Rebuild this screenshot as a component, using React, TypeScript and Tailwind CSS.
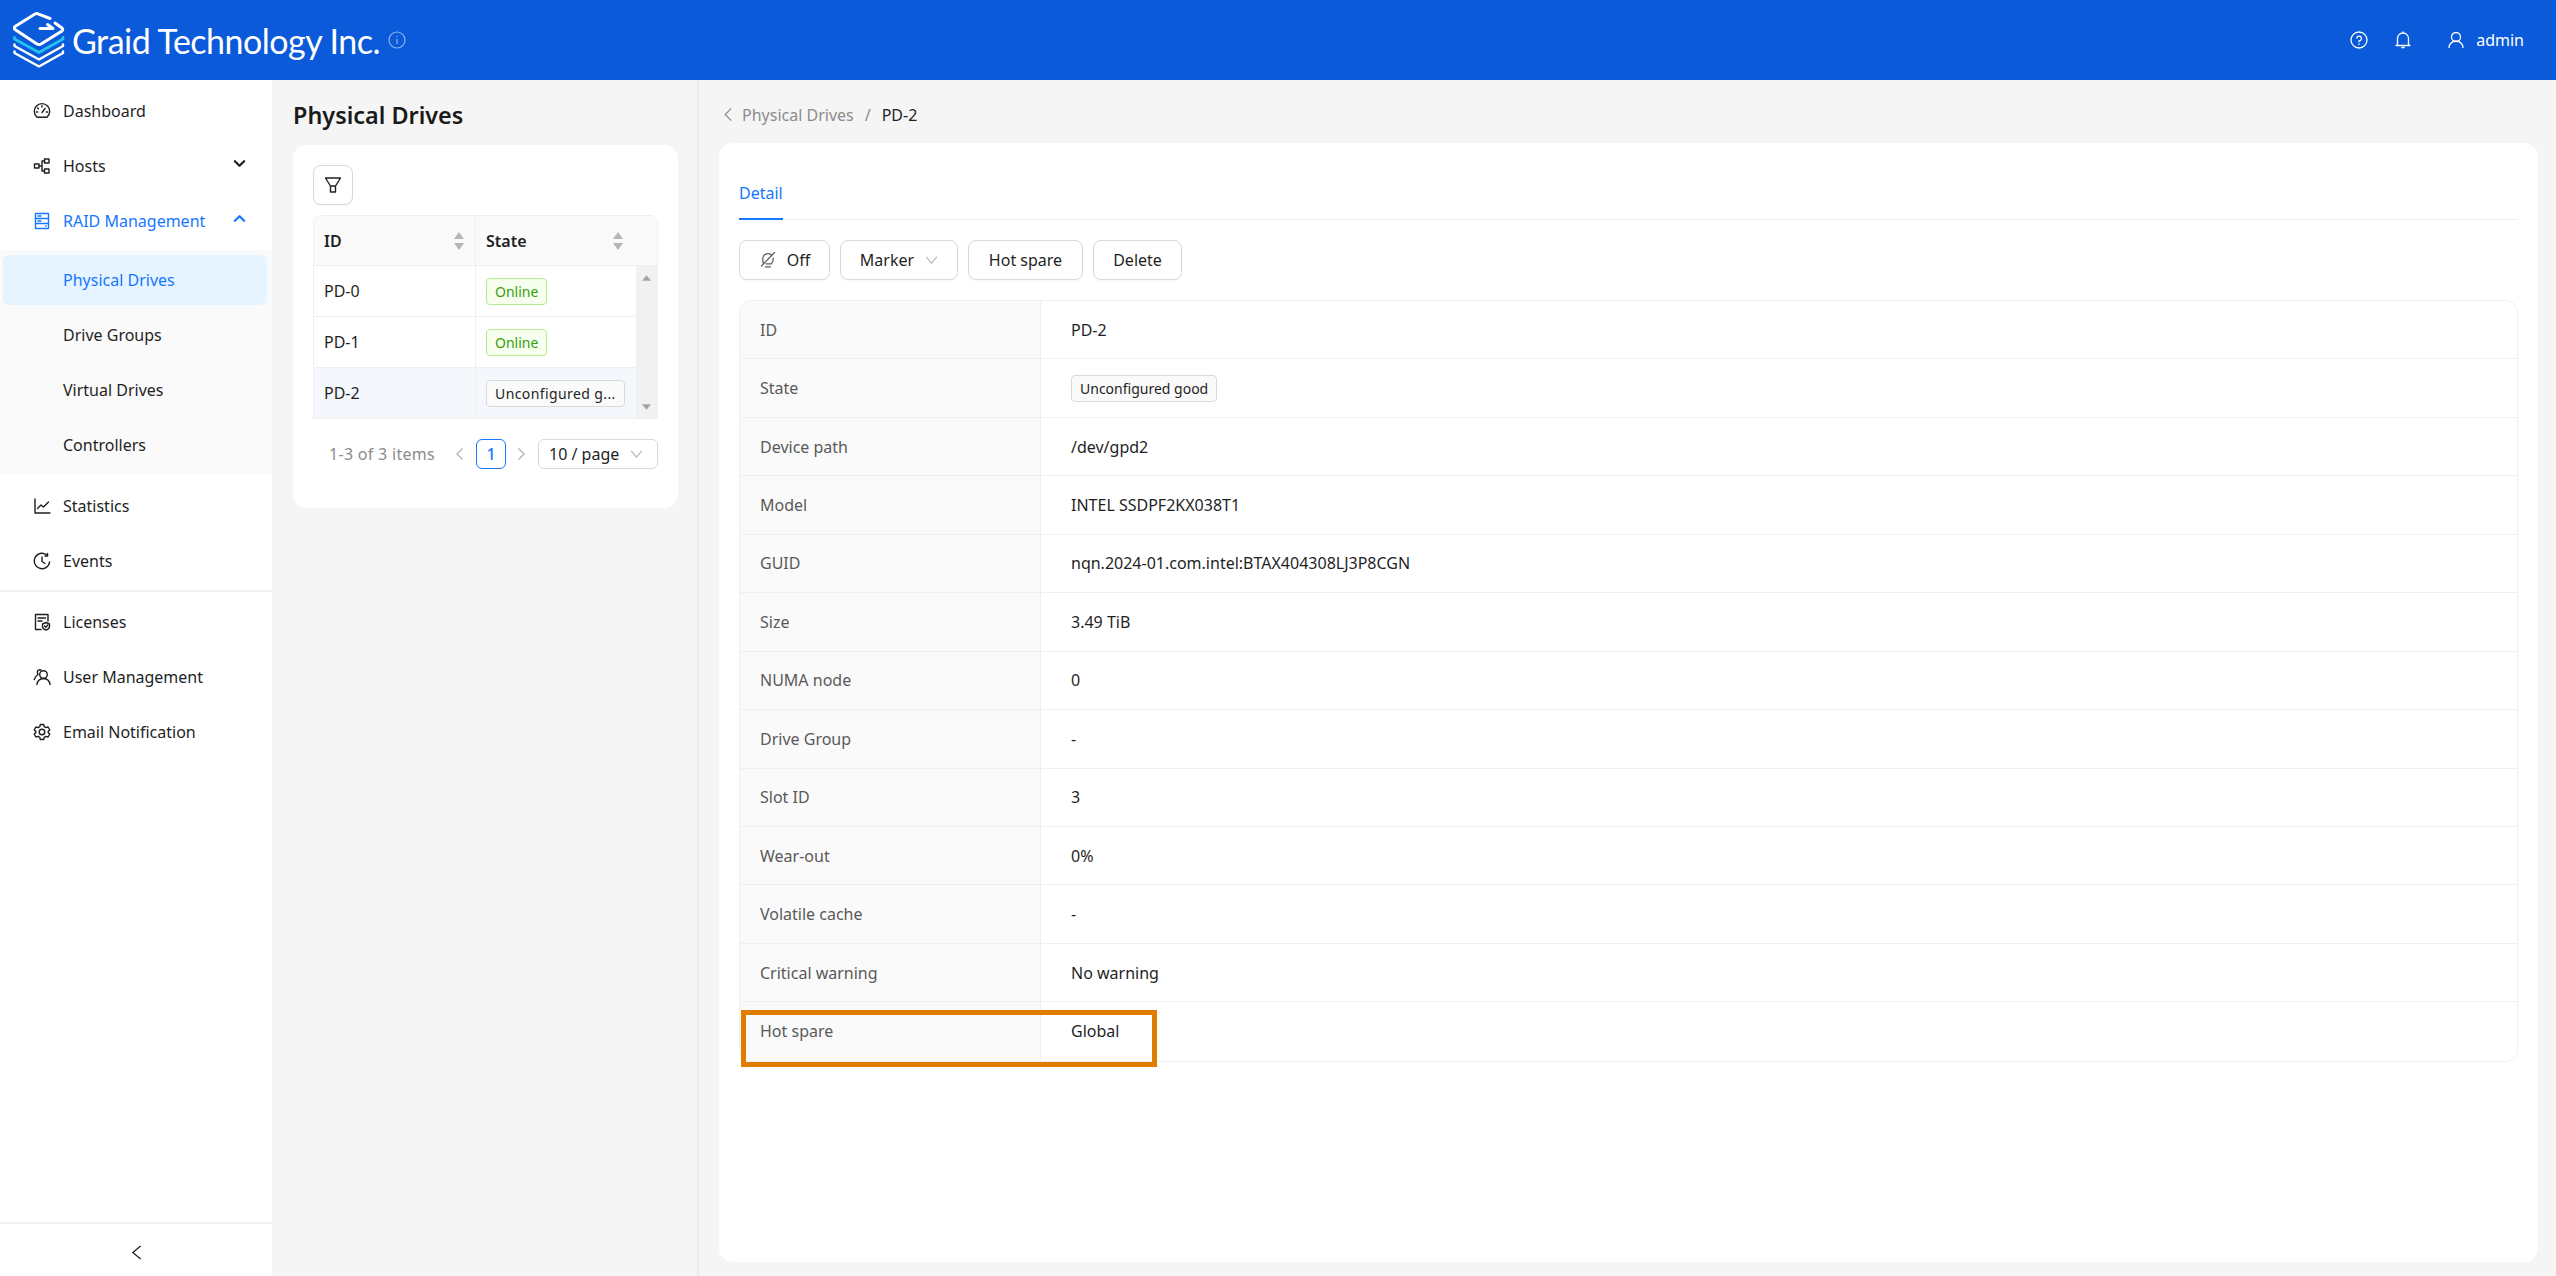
import React from "react";

const Ic = ({ children, className = "w-[18px] h-[18px]", sw = 1.4 }: { children: React.ReactNode; className?: string; sw?: number }) => (
  <svg viewBox="0 0 18 18" fill="none" stroke="currentColor" strokeWidth={sw} strokeLinecap="round" strokeLinejoin="round" className={`shrink-0 ${className}`}>
    {children}
  </svg>
);

const Logo = () => (
  <svg viewBox="0 0 52 56" fill="none" stroke="white" strokeWidth="2.4" strokeLinejoin="round" strokeLinecap="round" className="w-[52px] h-[56px] shrink-0">
    <path d="M37 6.5 L25 1.8 Q23.5 1.2 22 2 L2 14.5 Q0.8 16 2 17.5 L24 32 Q26 33 28 32 L49 19 Q50.5 17.5 49 16 L42 11" strokeWidth="3" />
    <path d="M27 16.5 H40 L34.5 12.5" strokeWidth="3" />
    <path d="M1.5 25.5 V27 L26 40.5 L50 27 V25.5" stroke="#22c3ee" strokeWidth="2.8" />
    <path d="M1.5 32.5 V34 L26 47.5 L50 34 V32.5" />
    <path d="M1.5 39.5 V41 L26 54.5 L50 41 V39.5" />
  </svg>
);

const icons: Record<string, React.ReactNode> = {
  dashboard: (
    <>
      <path d="M4 15.2 A7.7 7.7 0 1 1 14 15.2 Z" />
      <path d="M9 10.5 L12 6.5" />
      <path d="M9 3.8 V5 M4.6 6 L5.5 6.8 M3.5 10 H4.7 M13.3 10 H14.5" />
    </>
  ),
  hosts: (
    <>
      <rect x="1.5" y="7" width="4.5" height="4" />
      <rect x="11.5" y="2" width="4.5" height="4" />
      <rect x="11.5" y="12" width="4.5" height="4" />
      <path d="M6 9 H9 M9 4 V14 M9 4 H11.5 M9 14 H11.5" />
    </>
  ),
  raid: (
    <>
      <rect x="2.5" y="1.5" width="13" height="15" />
      <path d="M2.5 6.5 H15.5 M2.5 11.5 H15.5 M5 4 H8 M5 9 H8 M12.5 14 H13" />
    </>
  ),
  stats: (
    <>
      <path d="M2 2 V16 H17" />
      <path d="M4.5 11.5 L8 8 L10.5 10 L15.5 5" />
    </>
  ),
  events: (
    <>
      <path d="M14.5 3.6 A7.7 7.7 0 1 0 16.6 10" />
      <path d="M9 5 V9.5 L12 11.5" />
      <path d="M14.5 1.5 V4 H12" />
    </>
  ),
  licenses: (
    <>
      <path d="M8 16.5 H2.5 V1.5 H15 V8" />
      <path d="M5 5 H12.5 M5 8 H9" />
      <path d="M13 9.5 L16.5 11 V13.5 Q16.5 16 13 17 Q9.5 16 9.5 13.5 V11 Z" />
      <path d="M11.5 13 L12.8 14.3 L14.8 12" />
    </>
  ),
  users: (
    <>
      <circle cx="10.5" cy="6.5" r="3.8" />
      <path d="M4 16.5 Q4.5 11 10.5 10.5 Q16.5 11 17 16.5" />
      <path d="M8 2 Q6 1 4.5 3 Q4 5 5 6.5 Q2 8.5 1.2 11.5" />
    </>
  ),
  settings: (
    <>
      <circle cx="9" cy="9" r="2.8" />
      <path d="M7.3 1.5 H10.7 L11.2 3.6 L13 4.6 L15.1 4 L16.8 7 L15.2 8.4 V9.6 L16.8 11 L15.1 14 L13 13.4 L11.2 14.4 L10.7 16.5 H7.3 L6.8 14.4 L5 13.4 L2.9 14 L1.2 11 L2.8 9.6 V8.4 L1.2 7 L2.9 4 L5 4.6 L6.8 3.6 Z" />
    </>
  ),
};

const Chevron = ({ up, className = "" }: { up?: boolean; className?: string }) => (
  <svg viewBox="0 0 14 9" fill="none" stroke="currentColor" strokeWidth="2.4" strokeLinecap="round" strokeLinejoin="round" className={`w-[13px] h-[9px] ${className}`}>
    <path d={up ? "M2 7 L7 2 L12 7" : "M2 2 L7 7 L12 2"} />
  </svg>
);

const NavRow = ({ icon, label, chevron, active }: { icon: string; label: string; chevron?: "up" | "down"; active?: boolean }) => (
  <div className={`h-[55px] shrink-0 flex items-center pl-[33px] pr-[26px] ${active ? "text-[#1677ff]" : "text-[#1f1f1f]"}`}>
    <Ic>{icons[icon]}</Ic>
    <span className="ml-[12px] flex-1">{label}</span>
    {chevron && <Chevron up={chevron === "up"} className="-mt-[4px]" />}
  </div>
);

const SubRow = ({ label, active }: { label: string; active?: boolean }) => (
  <div className={`h-[50px] flex items-center pl-[60px] rounded-[6px] ${active ? "bg-[#e6f4ff] text-[#1677ff]" : "text-[#1f1f1f]"}`}>{label}</div>
);

const Sort = () => (
  <svg viewBox="0 0 12 20" className="w-[12px] h-[20px] shrink-0" fill="#b5b5b5">
    <path d="M6 1 L11 8 H1 Z" />
    <path d="M6 19 L1 12 H11 Z" />
  </svg>
);

const Tag = ({ children, green, className = "" }: { children: React.ReactNode; green?: boolean; className?: string }) => (
  <span className={`inline-flex items-center h-[27px] px-[8px] rounded-[4px] border text-[14px] whitespace-nowrap ${green ? "bg-[#f6ffed] border-[#b7eb8f] text-[#389e0d]" : "bg-[#fafafa] border-[#d9d9d9] text-[#1f1f1f]"} ${className}`}>
    {children}
  </span>
);

const TableRow = ({ id, children, sel }: { id: string; children: React.ReactNode; sel?: boolean }) => (
  <div className={`flex h-[51px] border-b border-[#f0f0f0] ${sel ? "bg-[#f4f8fc]" : "bg-white"}`}>
    <div className="w-[162px] flex items-center pl-[10px] border-r border-[#f0f0f0]">{id}</div>
    <div className="flex-1 flex items-center pl-[10px]">{children}</div>
  </div>
);

const Btn = ({ children, className = "" }: { children: React.ReactNode; className?: string }) => (
  <div className={`h-[40px] flex items-center justify-center rounded-[8px] border border-[#d9d9d9] bg-white shadow-[0_2px_0_rgba(0,0,0,0.02)] text-[#1f1f1f] ${className}`}>{children}</div>
);

const rows: [string, React.ReactNode][] = [
  ["ID", "PD-2"],
  ["State", <Tag key="s">Unconfigured good</Tag>],
  ["Device path", "/dev/gpd2"],
  ["Model", "INTEL SSDPF2KX038T1"],
  ["GUID", "nqn.2024-01.com.intel:BTAX404308LJ3P8CGN"],
  ["Size", "3.49 TiB"],
  ["NUMA node", "0"],
  ["Drive Group", "-"],
  ["Slot ID", "3"],
  ["Wear-out", "0%"],
  ["Volatile cache", "-"],
  ["Critical warning", "No warning"],
  ["Hot spare", "Global"],
];

export default function App() {
  return (
    <div className="w-[2556px] h-[1276px] flex flex-col overflow-hidden bg-[#f5f5f5] text-[16px] text-[#1f1f1f]" style={{ fontFamily: '"Noto Sans", "Open Sans", sans-serif' }}>
      <header className="h-[80px] shrink-0 bg-[#0b5ad9] flex items-center pl-[13px] text-white">
        <Logo />
        <span className="ml-[7px] text-[34px] tracking-[-0.5px] font-normal" style={{ fontFamily: 'Lato, "Noto Sans", sans-serif' }}>Graid Technology Inc.</span>
        <svg viewBox="0 0 18 18" fill="none" stroke="#8fb4ee" strokeWidth="1.2" className="w-[18px] h-[18px] ml-[8px]">
          <circle cx="9" cy="9" r="8" />
          <path d="M9 8 V13 M9 5 V6" />
        </svg>
        <div className="ml-auto flex items-center pr-[32px]">
          <svg viewBox="0 0 18 18" fill="none" stroke="white" strokeWidth="1.3" strokeLinecap="round" className="w-[18px] h-[18px]">
            <circle cx="9" cy="9" r="8" />
            <path d="M6.8 7 A2.3 2.3 0 1 1 9 9.8 V10.8 M9 13 V13.4" />
          </svg>
          <svg viewBox="0 0 18 18" fill="none" stroke="white" strokeWidth="1.3" strokeLinecap="round" strokeLinejoin="round" className="w-[18px] h-[18px] ml-[26px]">
            <path d="M3.5 14.5 V7.5 A5.5 5.5 0 0 1 14.5 7.5 V14.5 M2 14.5 H16 M9 .8 V2 M7.8 16.5 H10.2" />
          </svg>
          <svg viewBox="0 0 18 18" fill="none" stroke="white" strokeWidth="1.3" strokeLinecap="round" className="w-[18px] h-[18px] ml-[35px]">
            <circle cx="9" cy="6" r="4.5" />
            <path d="M2 16.5 A7 6.5 0 0 1 16 16.5" />
          </svg>
          <span className="ml-[11px] text-[16px]">admin</span>
        </div>
      </header>
      <div className="flex-1 flex min-h-0">
        <aside className="w-[272px] shrink-0 bg-white flex flex-col pt-[3px]">
          <NavRow icon="dashboard" label="Dashboard" />
          <NavRow icon="hosts" label="Hosts" chevron="down" />
          <NavRow icon="raid" label="RAID Management" chevron="up" active />
          <div className="bg-[#fafafa] h-[225px] shrink-0 mt-[2px] pt-[5px] pl-[3px] pr-[5px]">
            <SubRow label="Physical Drives" active />
            <div className="h-[5px]" />
            <SubRow label="Drive Groups" />
            <div className="h-[5px]" />
            <SubRow label="Virtual Drives" />
            <div className="h-[5px]" />
            <SubRow label="Controllers" />
          </div>
          <div className="h-[3px] shrink-0" />
          <NavRow icon="stats" label="Statistics" />
          <NavRow icon="events" label="Events" />
          <div className="border-b-2 border-[#f0f0f0] mt-[2px]" />
          <div className="h-[2px] shrink-0" />
          <NavRow icon="licenses" label="Licenses" />
          <NavRow icon="users" label="User Management" />
          <NavRow icon="settings" label="Email Notification" />
          <div className="mt-auto h-[54px] border-t-2 border-[#f0f0f0] flex items-center justify-center pt-[4px]">
            <svg viewBox="0 0 12 16" fill="none" stroke="#1f1f1f" strokeWidth="1.4" className="w-[11px] h-[15px]">
              <path d="M10.5 1 L2 8 L10.5 15" />
            </svg>
          </div>
        </aside>
        <section className="w-[427px] shrink-0 border-r-2 border-[#ebebeb] pl-[21px] pr-[19px]">
          <h1 className="text-[23.4px] font-semibold h-[65px] pt-[6px] flex items-center text-[#1a1a1a]">Physical Drives</h1>
          <div className="bg-white rounded-[14px] h-[363px] px-[20px] pt-[20px]">
            <Btn className="w-[40px]">
              <svg viewBox="0 0 18 18" fill="none" stroke="#1f1f1f" strokeWidth="1.4" strokeLinejoin="round" className="w-[18px] h-[18px]">
                <path d="M1.5 2 H16.5 L11.5 10 V16 H6.5 V10 Z M6.5 10 H11.5" />
              </svg>
            </Btn>
            <div className="mt-[10px] rounded-t-[8px] border border-[#f0f0f0] border-b-0 overflow-hidden relative">
              <div className="flex h-[50px] bg-[#fafafa] border-b border-[#f0f0f0] font-semibold">
                <div className="w-[162px] flex items-center pl-[10px] pr-[10px] border-r border-[#f0f0f0] justify-between"><span>ID</span><Sort /></div>
                <div className="flex-1 flex items-center pl-[10px] pr-[33px] justify-between"><span>State</span><Sort /></div>
              </div>
              <div className="flex">
                <div className="flex-1">
                  <TableRow id="PD-0"><Tag green>Online</Tag></TableRow>
                  <TableRow id="PD-1"><Tag green>Online</Tag></TableRow>
                  <TableRow id="PD-2" sel><Tag className="w-[139px] tracking-[0.4px]">Unconfigured g...</Tag></TableRow>
                </div>
                <div className="w-[21px] bg-[#f1f1f1] flex flex-col items-center justify-between py-[9px]">
                  <svg viewBox="0 0 10 6" fill="#a3a3a3" className="w-[9px] h-[6px]"><path d="M5 0 L10 6 H0 Z" /></svg>
                  <svg viewBox="0 0 10 6" fill="#a3a3a3" className="w-[9px] h-[6px]"><path d="M5 6 L0 0 H10 Z" /></svg>
                </div>
              </div>
            </div>
            <div className="flex items-center mt-[20px] h-[30px]">
              <span className="ml-[16px] text-[#8c8c8c] tracking-[0.3px]">1-3 of 3 items</span>
              <svg viewBox="0 0 10 16" fill="none" stroke="#a8a8a8" strokeWidth="1.3" className="w-[9px] h-[14px] ml-[20px]"><path d="M8.5 1.5 L2 8 L8.5 14.5" /></svg>
              <div className="ml-[12px] w-[30px] h-[30px] flex items-center justify-center rounded-[6px] border border-[#1677ff] text-[#1677ff] font-medium">1</div>
              <svg viewBox="0 0 10 16" fill="none" stroke="#a8a8a8" strokeWidth="1.3" className="w-[9px] h-[14px] ml-[11px]"><path d="M1.5 1.5 L8 8 L1.5 14.5" /></svg>
              <div className="ml-auto w-[120px] h-[30px] flex items-center justify-between pl-[10px] pr-[14px] rounded-[6px] border border-[#d9d9d9]">
                <span>10 / page</span>
                <svg viewBox="0 0 14 9" fill="none" stroke="#b5b5b5" strokeWidth="1.2" className="w-[13px] h-[8px]"><path d="M1 1 L7 8 L13 1" /></svg>
              </div>
            </div>
          </div>
        </section>
        <main className="flex-1 min-w-0 pl-[20px] pr-[18px] flex flex-col pb-[14px]">
          <div className="h-[63px] flex items-center pl-[4px] pt-[6px] shrink-0">
            <svg viewBox="0 0 10 16" fill="none" stroke="#8c8c8c" strokeWidth="1.3" className="w-[10px] h-[15px]"><path d="M8.5 1.5 L2 8 L8.5 14.5" /></svg>
            <span className="ml-[9px] text-[#8c8c8c]">Physical Drives</span>
            <span className="mx-[11px] text-[#8c8c8c]">/</span>
            <span>PD-2</span>
          </div>
          <div className="flex-1 bg-white rounded-[14px] px-[20px] pt-[28px]">
            <div className="h-[49px] border-b border-[#f0f0f0] flex">
              <div className="h-[49px] border-b-2 border-[#1677ff] text-[#1677ff] flex items-center pb-[3px]">Detail</div>
            </div>
            <div className="flex gap-[10px] mt-[20px]">
              <Btn className="w-[91px]">
                <svg viewBox="0 0 18 18" fill="none" stroke="#595959" strokeWidth="1.2" strokeLinecap="round" className="w-[18px] h-[18px]">
                  <path d="M4.5 13 Q3.5 9.5 3.8 7.5 A5.2 5.2 0 0 1 13 4.5 M14.2 7 Q14.5 10 12.5 12.8 H7 M6.5 15.8 H11.5 M15.5 1.5 L2.5 15" />
                </svg>
                <span className="ml-[10px]">Off</span>
              </Btn>
              <Btn className="w-[118px]">
                <span>Marker</span>
                <svg viewBox="0 0 14 9" fill="none" stroke="#b5b5b5" strokeWidth="1.2" className="w-[13px] h-[8px] ml-[11px]"><path d="M1 1 L7 8 L13 1" /></svg>
              </Btn>
              <Btn className="w-[115px]">Hot spare</Btn>
              <Btn className="w-[89px]">Delete</Btn>
            </div>
            <div className="relative mt-[20px] rounded-[12px] border border-[#f0f0f0] overflow-hidden">
              {rows.map(([k, v], i) => (
                <div key={k} className={`flex h-[58.45px] ${i < rows.length - 1 ? "border-b border-[#f0f0f0]" : ""}`}>
                  <div className="w-[301px] shrink-0 bg-[#fafafa] border-r border-[#f0f0f0] pl-[20px] flex items-center text-[#595959]">{k}</div>
                  <div className="flex-1 pl-[30px] flex items-center">{v}</div>
                </div>
              ))}
            </div>
            <div className="relative">
              <div className="absolute left-[2px] top-[-52px] w-[416px] h-[57px] border-[5px] border-[#e07c00]" />
            </div>
          </div>
        </main>
      </div>
    </div>
  );
}
